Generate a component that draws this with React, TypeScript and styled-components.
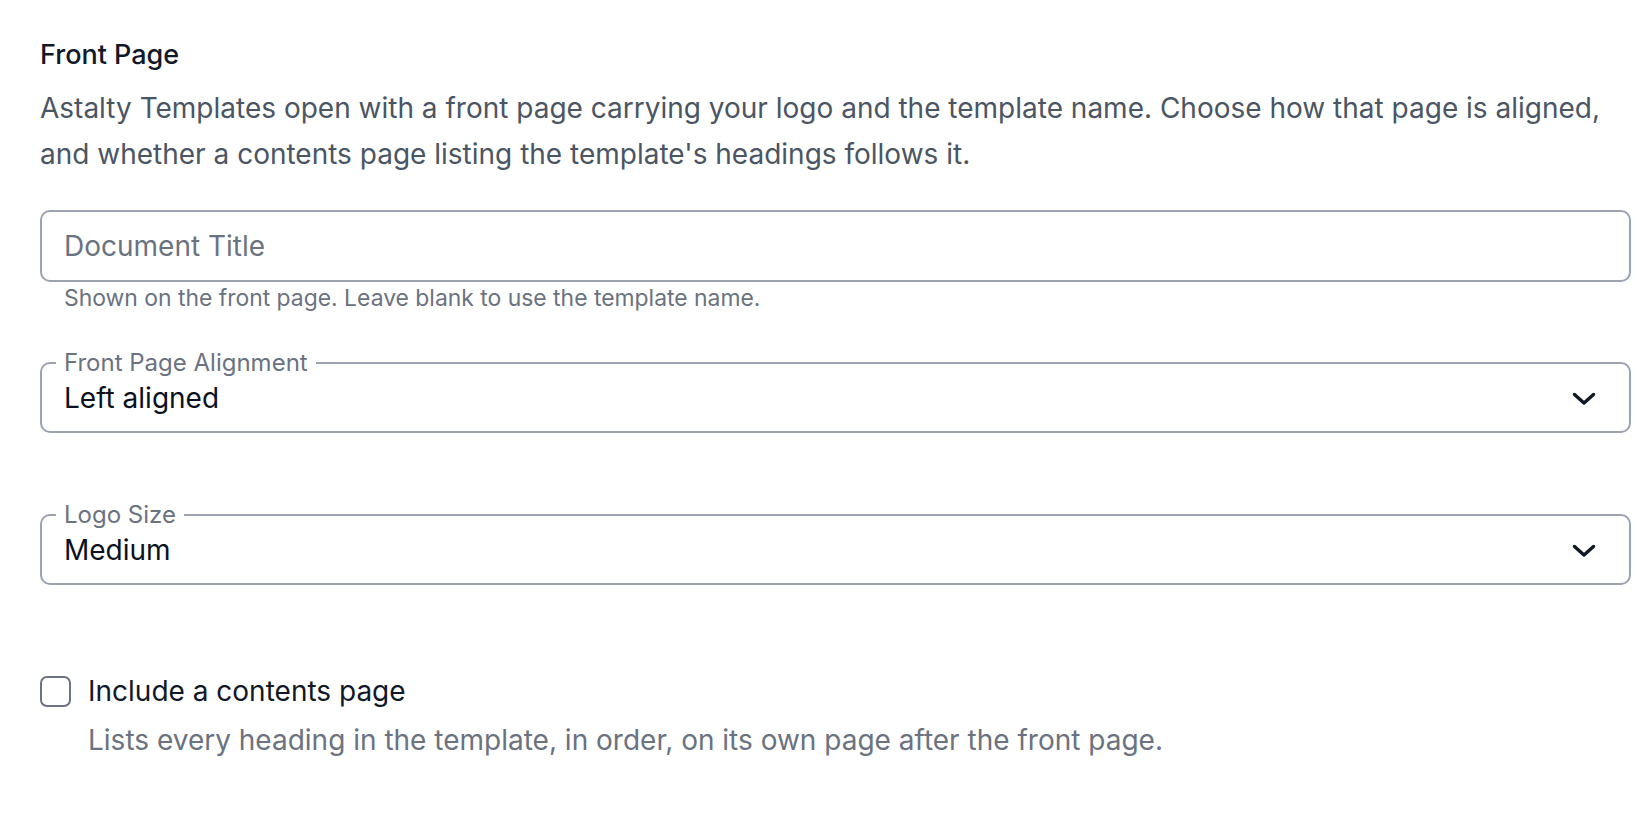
import React from "react";
import styled, { createGlobalStyle } from "styled-components";

const GlobalStyle = createGlobalStyle`
  html, body {
    margin: 0;
    padding: 0;
    background: #ffffff;
  }
  body {
    font-family: Inter, "Noto Sans", "Liberation Sans", sans-serif;
    -webkit-font-smoothing: antialiased;
  }
  * {
    box-sizing: border-box;
  }
`;

export default function App() {
  return (
    <>
      <GlobalStyle />
      <Page>
        <Heading>Front Page</Heading>
        <Intro>
          Astalty Templates open with a front page carrying your logo and the template name. Choose
          how that page is aligned, and whether a contents page listing the template's headings
          follows it.
        </Intro>

        <Form>
          <FieldGroup $height={141}>
            <TextInput placeholder="Document Title" />
            <Helper>Shown on the front page. Leave blank to use the template name.</Helper>
          </FieldGroup>

          <FieldGroup $height={152}>
            <SelectBox>
              <Legend>Front Page Alignment</Legend>
              <SelectRow>
                <SelectValue>Left aligned</SelectValue>
                <Chevron />
              </SelectRow>
            </SelectBox>
          </FieldGroup>

          <FieldGroup $height={152}>
            <SelectBox>
              <Legend>Logo Size</Legend>
              <SelectRow>
                <SelectValue>Medium</SelectValue>
                <Chevron />
              </SelectRow>
            </SelectBox>
          </FieldGroup>

          <CheckGroup>
            <CheckRow>
              <CheckBox />
              <CheckLabel>Include a contents page</CheckLabel>
            </CheckRow>
            <CheckHint>
              Lists every heading in the template, in order, on its own page after the front page.
            </CheckHint>
          </CheckGroup>
        </Form>
      </Page>
    </>
  );
}

function Chevron() {
  return (
    <ChevronSvg viewBox="0 0 24 14" fill="none">
      <path
        d="M2.5 2.5 L12 11 L21.5 2.5"
        stroke="#111827"
        strokeWidth="3.4"
        strokeLinecap="round"
        strokeLinejoin="round"
      />
    </ChevronSvg>
  );
}

const Page = styled.div`
  padding: 37px 15px 40px 40px;
`;

const Heading = styled.h2`
  margin: 0;
  font-size: 27px;
  line-height: 36px;
  font-weight: 500;
  color: #111827;
`;

const Intro = styled.p`
  margin: 12px 0 0;
  font-size: 28px;
  line-height: 46px;
  font-weight: 400;
  color: #4b5563;
`;

const Form = styled.div`
  display: flex;
  flex-direction: column;
  margin-top: 33px;
`;

const FieldGroup = styled.div<{ $height: number }>`
  display: flex;
  flex-direction: column;
  height: ${(p) => p.$height}px;
`;

const TextInput = styled.input`
  width: 100%;
  height: 72px;
  margin: 0;
  padding: 0 22px;
  border: 2px solid #9ca3af;
  border-radius: 10px;
  font-family: inherit;
  font-size: 28px;
  color: #111827;
  background: #ffffff;
  outline: none;
  &::placeholder {
    color: #6b7280;
  }
`;

const Helper = styled.div`
  margin-top: 2px;
  padding-left: 24px;
  font-size: 22.9px;
  line-height: 28px;
  color: #6b7280;
`;

const SelectBox = styled.fieldset`
  margin: 0;
  padding: 0 33px 0 14px;
  min-width: 0;
  height: 82px;
  border: 2px solid #9ca3af;
  border-radius: 10px;
`;

const Legend = styled.legend`
  padding: 0 8px;
  font-size: 24px;
  line-height: 24px;
  color: #6b7280;
`;

const SelectRow = styled.div`
  display: flex;
  align-items: flex-start;
  justify-content: space-between;
  margin-top: 6px;
  padding-left: 8px;
  height: 34px;
`;

const SelectValue = styled.span`
  font-size: 28px;
  line-height: 34px;
  color: #0b1120;
`;

const ChevronSvg = styled.svg`
  flex: none;
  width: 24px;
  height: 14px;
  margin-top: 11px;
`;

const CheckGroup = styled.div`
  display: flex;
  flex-direction: column;
  padding-top: 13px;
`;

const CheckRow = styled.label`
  display: flex;
  align-items: center;
  gap: 17px;
  height: 46px;
`;

const CheckBox = styled.span`
  flex: none;
  width: 31px;
  height: 31px;
  border: 2px solid #6b7280;
  border-radius: 7px;
  background: #ffffff;
`;

const CheckLabel = styled.span`
  font-size: 28px;
  line-height: 34px;
  color: #111827;
`;

const CheckHint = styled.div`
  padding-left: 48px;
  margin-top: 8px;
  font-size: 28px;
  line-height: 36px;
  color: #6b7280;
`;
